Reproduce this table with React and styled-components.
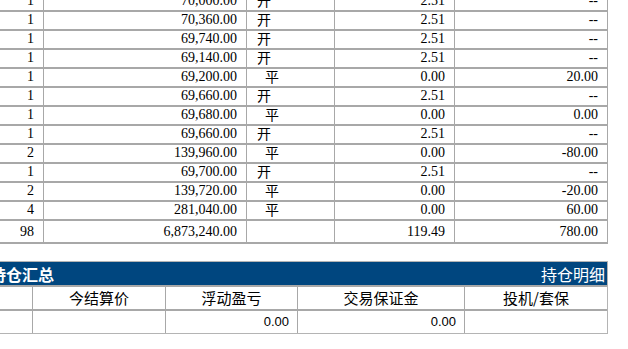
import React from 'react';
import styled, { createGlobalStyle } from 'styled-components';

const GlobalStyle = createGlobalStyle`
  html, body {
    margin: 0;
    padding: 0;
    background: #fff;
    overflow: hidden;
  }
`;

const Viewport = styled.div`
  width: 628px;
  height: 349px;
  overflow: hidden;
`;

// the page is scrolled a little to the right and down
const Scrolled = styled.div`
  margin: -7px 0 0 -10px;
  width: 618px;
`;

const DetailTable = styled.div`
  border-right: 1px solid #a8a8a8;
`;

const DetailRow = styled.div`
  display: grid;
  grid-template-columns: 54px 203px 88px 120px 152px;
  height: ${(p) => (p.total ? '23px' : '19px')};
  box-sizing: border-box;
  border-bottom: 2px solid #a8a8a8;
`;

const NumCell = styled.div`
  font-family: "Liberation Serif", "Times New Roman", serif;
  font-size: 14px;
  line-height: ${(p) => (p.total ? '21px' : '16px')};
  color: #000;
  text-align: right;
  padding-right: 9px;
  border-right: 1px solid #a8a8a8;
  white-space: nowrap;
  &:last-child {
    border-right: none;
  }
`;

const SideCell = styled.div`
  font-family: "Noto Sans CJK SC", sans-serif;
  font-size: 14px;
  line-height: 15px;
  color: #000;
  padding-left: ${(p) => (p.close ? '18px' : '10px')};
  border-right: 1px solid #a8a8a8;
`;

const Spacer = styled.div`
  height: 17px;
`;

const SummaryTable = styled.div`
  border: 1px solid #b4b4b4;
  border-left: none;
`;

const TitleBar = styled.div`
  display: flex;
  justify-content: space-between;
  align-items: center;
  height: 23px;
  padding-right: 2px;
  background: #00467f;
  color: #fff;
  font-family: "Noto Sans CJK SC", sans-serif;
  font-size: 16px;
`;

const TitleMain = styled.span`
  font-weight: 700;
`;

const TitleLink = styled.span`
  font-weight: 400;
`;

const SummaryRow = styled.div`
  display: grid;
  grid-template-columns: 43px 133px 132px 167px 142px;
  height: ${(p) => (p.head ? '24px' : '24px')};
  box-sizing: border-box;
  border-top: 2px solid #a8a8a8;
`;

const HeadCell = styled.div`
  font-family: "Noto Sans CJK SC", sans-serif;
  font-size: 15px;
  line-height: 22px;
  color: #000;
  text-align: center;
  border-right: 1px solid #a8a8a8;
  &:last-child {
    border-right: none;
  }
`;

const ValueCell = styled.div`
  font-family: "Liberation Sans", Arial, sans-serif;
  font-size: 13px;
  line-height: 22px;
  color: #000;
  text-align: right;
  padding-right: 8px;
  border-right: 1px solid #a8a8a8;
  &:last-child {
    border-right: none;
  }
`;

const trades = [
  ['1', '70,000.00', '开', '2.51', '--'],
  ['1', '70,360.00', '开', '2.51', '--'],
  ['1', '69,740.00', '开', '2.51', '--'],
  ['1', '69,140.00', '开', '2.51', '--'],
  ['1', '69,200.00', '平', '0.00', '20.00'],
  ['1', '69,660.00', '开', '2.51', '--'],
  ['1', '69,680.00', '平', '0.00', '0.00'],
  ['1', '69,660.00', '开', '2.51', '--'],
  ['2', '139,960.00', '平', '0.00', '-80.00'],
  ['1', '69,700.00', '开', '2.51', '--'],
  ['2', '139,720.00', '平', '0.00', '-20.00'],
  ['4', '281,040.00', '平', '0.00', '60.00'],
];

const App = () => (
  <Viewport>
    <GlobalStyle />
    <Scrolled>
      <DetailTable>
        {trades.map((t, i) => (
          <DetailRow key={i}>
            <NumCell>{t[0]}</NumCell>
            <NumCell>{t[1]}</NumCell>
            <SideCell close={t[2] === '平'}>{t[2]}</SideCell>
            <NumCell>{t[3]}</NumCell>
            <NumCell>{t[4]}</NumCell>
          </DetailRow>
        ))}
        <DetailRow total>
          <NumCell total>98</NumCell>
          <NumCell total>6,873,240.00</NumCell>
          <SideCell />
          <NumCell total>119.49</NumCell>
          <NumCell total>780.00</NumCell>
        </DetailRow>
      </DetailTable>

      <Spacer />

      <SummaryTable>
        <TitleBar>
          <TitleMain>持仓汇总</TitleMain>
          <TitleLink>持仓明细</TitleLink>
        </TitleBar>
        <SummaryRow head>
          <HeadCell />
          <HeadCell>今结算价</HeadCell>
          <HeadCell>浮动盈亏</HeadCell>
          <HeadCell>交易保证金</HeadCell>
          <HeadCell>投机/套保</HeadCell>
        </SummaryRow>
        <SummaryRow>
          <ValueCell />
          <ValueCell />
          <ValueCell>0.00</ValueCell>
          <ValueCell>0.00</ValueCell>
          <ValueCell />
        </SummaryRow>
      </SummaryTable>
    </Scrolled>
  </Viewport>
);

export default App;
